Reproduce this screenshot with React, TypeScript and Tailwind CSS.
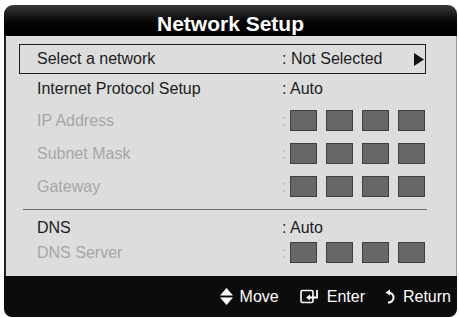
import React from "react";

type Row = {
  label: string;
  value?: string;
  boxes?: boolean;
  enabled: boolean;
  h: string;
};

const rows: Row[] = [
  { label: "Internet Protocol Setup", value: "Auto", enabled: true, h: "h-[30px]" },
  { label: "IP Address", boxes: true, enabled: false, h: "h-[33px]" },
  { label: "Subnet Mask", boxes: true, enabled: false, h: "h-[33px]" },
  { label: "Gateway", boxes: true, enabled: false, h: "h-[33px]" },
];

function Boxes() {
  return (
    <div className="flex items-center">
      <span className="mr-[2px] w-[6px] text-[#b4b4b4]">:</span>
      <div className="flex gap-[9px]">
        {[0, 1, 2, 3].map((i) => (
          <div key={i} className="h-[21px] w-[27px] border border-[#3f3f3f] bg-[#676767]" />
        ))}
      </div>
    </div>
  );
}

function SettingRow({ row }: { row: Row }) {
  return (
    <div className={`ml-[13px] flex w-[408px] items-center ${row.h}`}>
      <div className={`w-[263px] pl-[18px] ${row.enabled ? "text-[#1c1c1c]" : "text-[#a6a6a6]"}`}>
        {row.label}
      </div>
      {row.boxes ? <Boxes /> : <div className="text-[#1c1c1c]">: {row.value}</div>}
    </div>
  );
}

function MoveIcon() {
  return (
    <svg width="13" height="17" viewBox="0 0 13 17">
      <path d="M6.5 0 L13 7.5 H0 Z" fill="#fff" />
      <path d="M0 9.5 H13 L6.5 17 Z" fill="#fff" />
    </svg>
  );
}

function EnterIcon() {
  return (
    <svg width="20" height="15" viewBox="0 0 20 15" fill="none">
      <rect x="1" y="1.5" width="12" height="12" rx="1.5" stroke="#fff" strokeWidth="1.6" />
      <path d="M17 1 V8.5 H9" stroke="#fff" strokeWidth="1.8" />
      <path d="M6 8.5 L10 5.5 V11.5 Z" fill="#fff" />
    </svg>
  );
}

function ReturnIcon() {
  return (
    <svg width="11" height="15" viewBox="0 0 11 15" fill="none">
      <path d="M4 3.5 A5 5 0 1 1 3 13.5" stroke="#fff" strokeWidth="2" />
      <path d="M0.5 3.5 L5 0.5 V6.5 Z" fill="#fff" />
    </svg>
  );
}

export default function App() {
  return (
    <div
      className="h-[318px] w-[459px] overflow-hidden bg-white pl-[4px] pt-[5px]"
      style={{ fontFamily: '"Liberation Sans", Arial, sans-serif' }}
    >
      <div className="flex w-[453px] flex-col">
        <div className="h-[31px] rounded-t-[9px] bg-gradient-to-b from-[#3a3a3a] via-[#0a0a0a] to-[#000] pt-[7px] text-center text-[21px] font-bold leading-[24px] text-white">
          Network Setup
        </div>
        <div className="flex h-[240px] flex-col border-l-2 border-r border-l-[#222] border-r-[#9a9a9a] bg-[#dddddd] pt-[8px] text-[16px]">
          <div className="ml-[13px] flex h-[30px] w-[407px] items-center border border-[#1e1e1e] text-[#1c1c1c]">
            <div className="w-[262px] pl-[17px]">Select a network</div>
            <div className="flex-1">: Not Selected</div>
            <svg width="10" height="13" viewBox="0 0 10 13" className="mr-[1px]">
              <path d="M0 0 L10 6.5 L0 13 Z" fill="#111" />
            </svg>
          </div>
          {rows.map((r) => (
            <SettingRow key={r.label} row={r} />
          ))}
          <div className="ml-[17px] mt-[6px] h-[1px] w-[404px] bg-[#707070]" />
          <div className="mt-[6px]">
            <SettingRow row={{ label: "DNS", value: "Auto", enabled: true, h: "h-[24px]" }} />
            <SettingRow row={{ label: "DNS Server", boxes: true, enabled: false, h: "h-[25px]" }} />
          </div>
        </div>
        <div className="flex h-[41px] items-center justify-end rounded-b-[8px] bg-[#0c0c0c] pr-[6px] text-[16px] text-white">
          <MoveIcon />
          <span className="ml-[7px]">Move</span>
          <span className="ml-[21px]">
            <EnterIcon />
          </span>
          <span className="ml-[7px]">Enter</span>
          <span className="ml-[20px]">
            <ReturnIcon />
          </span>
          <span className="ml-[7px]">Return</span>
        </div>
      </div>
    </div>
  );
}
